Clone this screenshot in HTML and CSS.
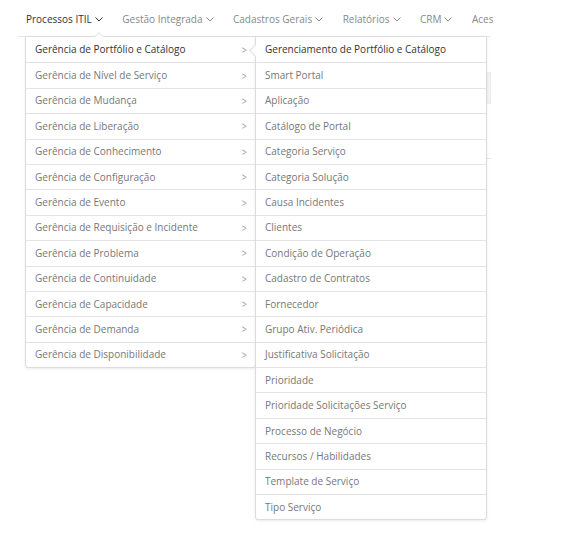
FILE: index.html
```html
<!DOCTYPE html>
<html lang="pt">
<head>
<meta charset="utf-8">
<link rel="stylesheet" href="styles.css">
</head>
<body>
<div class="page">
  <nav class="topnav">
    <ul class="navlist">
      <li class="navitem active">Processos ITIL <svg class="caret" viewBox="0 0 8 5"><path d="M0.5 0.5 L4 4 L7.5 0.5"/></svg></li>
      <li class="navitem">Gestão Integrada <svg class="caret" viewBox="0 0 8 5"><path d="M0.5 0.5 L4 4 L7.5 0.5"/></svg></li>
      <li class="navitem">Cadastros Gerais <svg class="caret" viewBox="0 0 8 5"><path d="M0.5 0.5 L4 4 L7.5 0.5"/></svg></li>
      <li class="navitem">Relatórios <svg class="caret" viewBox="0 0 8 5"><path d="M0.5 0.5 L4 4 L7.5 0.5"/></svg></li>
      <li class="navitem">CRM <svg class="caret" viewBox="0 0 8 5"><path d="M0.5 0.5 L4 4 L7.5 0.5"/></svg></li>
      <li class="navitem">Acesso</li>
    </ul>
  </nav>
  <div class="bgcontent">
    <div class="bgbox"></div>
    <div class="bgline"></div>
  </div>
  <div class="notch-up"></div>
  <ul class="menu main">
    <li class="row current">Gerência de Portfólio e Catálogo<span class="chev">&gt;</span></li>
    <li class="row">Gerência de Nível de Serviço<span class="chev">&gt;</span></li>
    <li class="row">Gerência de Mudança<span class="chev">&gt;</span></li>
    <li class="row">Gerência de Liberação<span class="chev">&gt;</span></li>
    <li class="row">Gerência de Conhecimento<span class="chev">&gt;</span></li>
    <li class="row">Gerência de Configuração<span class="chev">&gt;</span></li>
    <li class="row">Gerência de Evento<span class="chev">&gt;</span></li>
    <li class="row">Gerência de Requisição e Incidente<span class="chev">&gt;</span></li>
    <li class="row">Gerência de Problema<span class="chev">&gt;</span></li>
    <li class="row">Gerência de Continuidade<span class="chev">&gt;</span></li>
    <li class="row">Gerência de Capacidade<span class="chev">&gt;</span></li>
    <li class="row">Gerência de Demanda<span class="chev">&gt;</span></li>
    <li class="row">Gerência de Disponibilidade<span class="chev">&gt;</span></li>
  </ul>
  <ul class="menu sub">
    <li class="row current">Gerenciamento de Portfólio e Catálogo</li>
    <li class="row">Smart Portal</li>
    <li class="row">Aplicação</li>
    <li class="row">Catálogo de Portal</li>
    <li class="row">Categoria Serviço</li>
    <li class="row">Categoria Solução</li>
    <li class="row">Causa Incidentes</li>
    <li class="row">Clientes</li>
    <li class="row">Condição de Operação</li>
    <li class="row">Cadastro de Contratos</li>
    <li class="row">Fornecedor</li>
    <li class="row">Grupo Ativ. Periódica</li>
    <li class="row">Justificativa Solicitação</li>
    <li class="row">Prioridade</li>
    <li class="row">Prioridade Solicitações Serviço</li>
    <li class="row">Processo de Negócio</li>
    <li class="row">Recursos / Habilidades</li>
    <li class="row">Template de Serviço</li>
    <li class="row">Tipo Serviço</li>
  </ul>
</div>
</body>
</html>
```
FILE: styles.css
```css
* { box-sizing: border-box; }
html, body {
  margin: 0;
  padding: 0;
  background: #fff;
  font-family: "Open Sans", "Liberation Sans", sans-serif;
  font-size: 10px;
  color: #777;
}
.page {
  position: relative;
  width: 574px;
  height: 536px;
}
.topnav {
  margin-left: 18px;
  width: 475px;
  height: 37px;
  overflow: hidden;
}
.navlist {
  list-style: none;
  margin: 0;
  padding: 2px 0 0 8px;
  display: flex;
  white-space: nowrap;
  width: 464px;
  height: 34px;
  box-sizing: content-box;
  align-items: center;
  border-bottom: 1px solid #e6e6e6;
}
.navitem {
  display: flex;
  align-items: center;
  gap: 3px;
  margin-right: 19.5px;
  color: #888;
  flex-shrink: 0;
}
.navitem.active { color: #333; }
.caret {
  width: 8px;
  height: 5px;
  fill: none;
  stroke: currentColor;
  stroke-width: 1;
  margin-top: 1px;
}
.notch-up {
  position: absolute;
  left: 96px;
  top: 33px;
  width: 6px;
  height: 6px;
  background: #fff;
  border-left: 1px solid #e6e6e6;
  border-top: 1px solid #e6e6e6;
  transform: rotate(45deg);
  z-index: 3;
}
.bgcontent { position: absolute; left: 486px; top: 72px; }
.bgbox { width: 5px; height: 32px; background: #f3f3f3; border: 1px solid #ececec; border-left: none; }
.bgline { margin-top: 54px; width: 5px; height: 1px; background: #e4e4e4; }
.menu {
  position: absolute;
  top: 36px;
  list-style: none;
  margin: 0;
  padding: 0;
  background: #fff;
  border: 1px solid #dcdcdc;
  border-radius: 0 0 3px 3px;
  box-shadow: 0 1px 3px rgba(0,0,0,0.08);
  z-index: 2;
}
.menu.main { left: 25px; width: 231px; }
.menu.sub { left: 255px; width: 232px; }
.row {
  height: 25.4px;
  display: flex;
  align-items: center;
  justify-content: space-between;
  padding: 0 8px 1px 9px;
  border-top: 1px solid #e4e4e4;
  white-space: nowrap;
}
.row:first-child { border-top: none; }
.row.current { color: #333; }
.chev {
  color: #999;
  font-size: 11px;
  transform: scaleX(0.8);
}
.menu.sub::before {
  content: "";
  position: absolute;
  left: -5px;
  top: 9px;
  width: 8px;
  height: 8px;
  background: #fff;
  border-left: 1px solid #dcdcdc;
  border-bottom: 1px solid #dcdcdc;
  transform: rotate(45deg);
}
```
